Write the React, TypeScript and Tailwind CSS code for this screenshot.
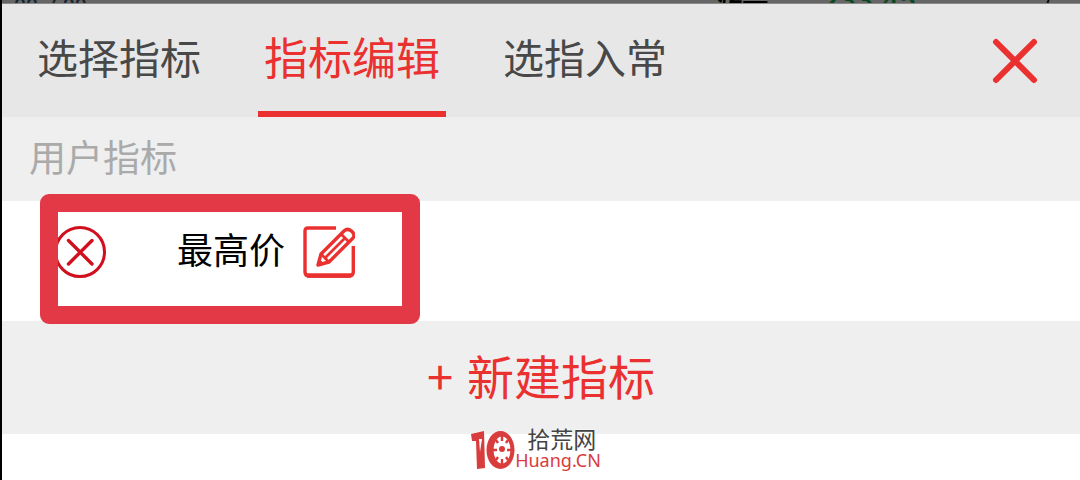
const tabs = [
  { label: "选择指标", active: false },
  { label: "指标编辑", active: true },
  { label: "选指入常", active: false },
];

const indicators = ["最高价"];

function CloseIcon() {
  return (
    <svg viewBox="0 0 46 46" className="size-[46px]" fill="none" stroke="#eb3030" strokeWidth="6" strokeLinecap="round">
      <path d="M4 4 42 42M42 4 4 42" />
    </svg>
  );
}

function RemoveIcon() {
  return (
    <svg viewBox="0 0 52 52" className="size-[52px]" fill="none" stroke="#d0101f" strokeWidth="3">
      <circle cx="26" cy="26" r="24.5" />
      <path d="M14.5 14.5 38 38M38 14.5 14.5 38" strokeWidth="3.4" strokeLinecap="round" />
    </svg>
  );
}

function EditIcon() {
  return (
    <svg viewBox="0 0 52 52" className="size-[52px]" fill="none" stroke="#eb3030" strokeWidth="3.4" strokeLinejoin="round">
      <path d="M33 2H5Q2 2 2 5V46Q2 50 6 50H46Q50.3 50 50.3 46V20" />
      <path d="M4 49.5H48" strokeWidth="4.5" />
      <path d="M15 39 18 28 41 5Q45 1.5 49 5.5T49 13L26 36Z" />
      <path d="M38 8 46 16M18 28 26 36M23 31 41 13" strokeWidth="2.8" />
      <path d="M14.5 39.5 16 33 21 38Z" fill="#eb3030" strokeWidth="1" />
    </svg>
  );
}

function LogoMark() {
  return (
    <svg viewBox="0 0 44 40" className="h-10 w-11" fill="#d93c3c">
      <path d="M0 4 13 1 14 38 6 39 5 11 1 11Z" />
      <path d="M8 9 11 9 9 22Z" fill="#fff" />
      <ellipse cx="29.5" cy="20" rx="14" ry="19" />
      <ellipse cx="31" cy="20" rx="8.5" ry="13.5" fill="#fff" />
      <circle cx="31" cy="19" r="3" />
      <path
        d="M31 6V11M31 29V34M22 20H26M36 20H40M25 10 27 13M37 10 35 13M25 30 27 27M37 30 35 27"
        fill="none"
        stroke="#d93c3c"
        strokeWidth="2.4"
      />
    </svg>
  );
}

export default function App() {
  return (
    <div className="min-h-screen border-l-2 border-black bg-white font-['Noto_Sans_CJK_SC',sans-serif]">
      {/* Dimmed quote page behind the panel */}
      <div className="flex h-1 items-start justify-between overflow-hidden border-b border-[#8a8a8a] bg-[#666] pr-7 pl-3 leading-6">
        <span className="-mt-[6px] font-['Roboto',sans-serif] text-[21px] font-medium text-[#17262f]">00-7.00</span>
        <div className="flex text-[26px] text-black">
          <span className="-mt-[10px] mr-[54px] font-bold">涨一</span>
          <span className="-mt-[11px] mr-[126px] font-['Roboto',sans-serif] text-[30px] font-medium text-[#0b4a20]">233.45</span>
          <span className="-mt-[10px]">/</span>
        </div>
      </div>

      <header className="flex items-start justify-between bg-[#e7e7e7] pr-[42px] pl-[29px]">
        <nav className="flex gap-[51px]">
          {tabs.map(({ label, active }) => (
            <button
              key={label}
              className={
                active
                  ? "h-[113px] border-b-[6px] border-[#eb3030] px-[6px] pb-1 text-[44px] leading-[60px] text-[#eb3030]"
                  : "h-[113px] border-b-[6px] border-transparent px-[6px] pb-1 text-[41px] leading-[60px] text-[#484848]"
              }
            >
              {label}
            </button>
          ))}
        </nav>
        <button aria-label="关闭" className="mt-[34px]">
          <CloseIcon />
        </button>
      </header>

      <main>
        <h2 className="bg-[#efefef] px-[27px] pb-[6px] text-[37px] leading-[78px] text-[#aaa]">用户指标</h2>

        <ul>
          {indicators.map((name) => (
            <li key={name} className="relative flex h-[120px] items-start px-[52px] pt-[25px]">
              <button aria-label={`删除${name}`}>
                <RemoveIcon />
              </button>
              <span className="ml-[71px] text-[36px] leading-[44px] text-black">{name}</span>
              <button aria-label={`编辑${name}`} className="ml-[18px]">
                <EditIcon />
              </button>
              {/* Highlight frame over the row */}
              <div className="pointer-events-none absolute -top-[7px] left-[38px] h-[130px] w-[380px] rounded-[9px] border-[18px] border-[#e33946]" />
            </li>
          ))}
        </ul>

        <button className="flex w-full justify-center gap-[14px] bg-[#efefef] pb-[6px] text-[47px] leading-[107px] text-[#eb3030]">
          <span>+</span>
          <span>新建指标</span>
        </button>
      </main>

      <footer className="relative -mt-1 flex justify-center pr-[10px]">
        <LogoMark />
        <div className="-mt-1 [text-shadow:0_0_2px_#fff,0_0_2px_#fff]">
          <div className="pl-3 text-[23px] leading-6 text-[#444]">拾荒网</div>
          <div className="font-['Noto_Sans',sans-serif] text-[18px] leading-5 text-[#d93c3c]">Huang.CN</div>
        </div>
      </footer>
    </div>
  );
}
